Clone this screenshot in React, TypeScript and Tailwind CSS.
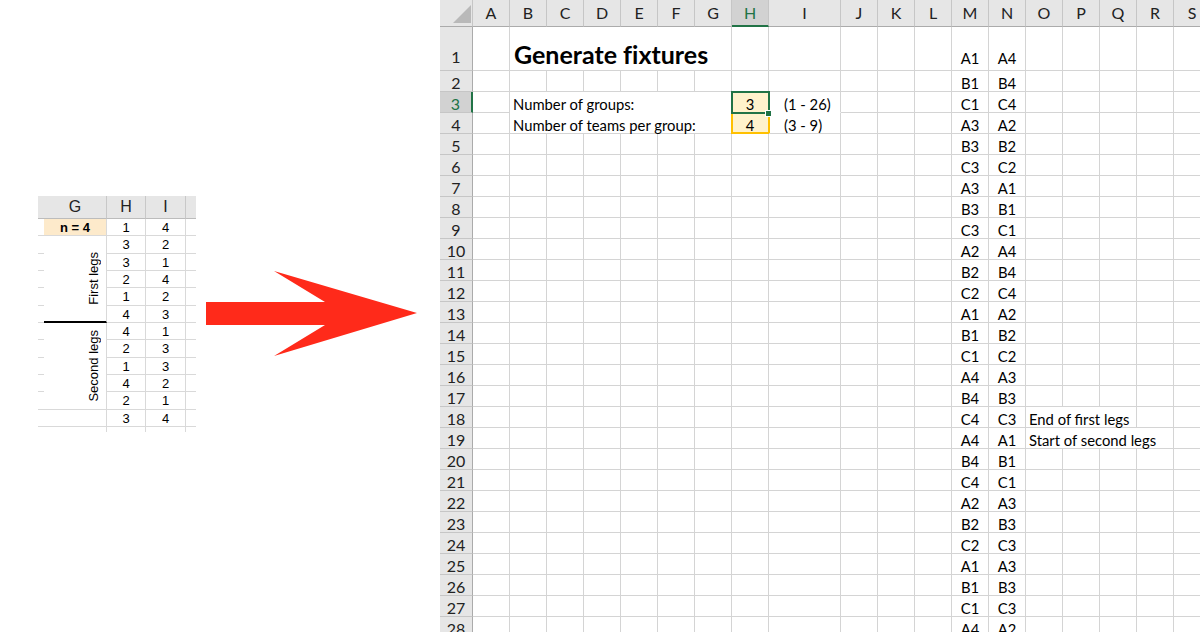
import React from 'react';

const COLS = ['A', 'B', 'C', 'D', 'E', 'F', 'G', 'H', 'I', 'J', 'K', 'L', 'M', 'N', 'O', 'P', 'Q', 'R', 'S'];
const widthOf = (c: string) => (c === 'I' ? 72 : 37);
const WCLS: Record<number, string> = {
  37: 'w-[37px]',
  72: 'w-[72px]',
  111: 'w-[111px]',
  148: 'w-[148px]',
  222: 'w-[222px]',
};

const PAIRS: [string, string][] = [
  ['A1', 'A4'], ['B1', 'B4'], ['C1', 'C4'], ['A3', 'A2'], ['B3', 'B2'], ['C3', 'C2'],
  ['A3', 'A1'], ['B3', 'B1'], ['C3', 'C1'], ['A2', 'A4'], ['B2', 'B4'], ['C2', 'C4'],
  ['A1', 'A2'], ['B1', 'B2'], ['C1', 'C2'], ['A4', 'A3'], ['B4', 'B3'], ['C4', 'C3'],
  ['A4', 'A1'], ['B4', 'B1'], ['C4', 'C1'], ['A2', 'A3'], ['B2', 'B3'], ['C2', 'C3'],
  ['A1', 'A3'], ['B1', 'B3'], ['C1', 'C3'], ['A4', 'A2'],
];

type Special = { span: number; node?: React.ReactNode; cls?: string; bcls?: string; pad?: string };

function specials(r: number): Record<string, Special> {
  const s: Record<string, Special> = {};
  const p = PAIRS[r - 1];
  if (p) {
    s.M = { span: 1, node: p[0], cls: 'justify-center' };
    s.N = { span: 1, node: p[1], cls: 'justify-center' };
  }
  if (r === 1) {
    s.B = {
      span: 6,
      node: (
        <span className="text-[25px] leading-[30px] font-bold [font-variant-ligatures:none]">Generate fixtures</span>
      ),
      cls: 'pl-[4px]',
      pad: 'pb-[1px]',
    };
  }
  if (r === 3) {
    s.B = { span: 6, node: 'Number of groups:', bcls: 'border-r-[#d4d4d4] border-b-transparent' };
    s.H = {
      span: 1,
      cls: 'justify-center bg-[#fff2cc]',
      node: (
        <>
          <span>3</span>
          <div className="absolute -left-px -top-px w-[39px] h-[23px] border-2 border-[#217346] z-10 pointer-events-none" />
          <div className="absolute left-[33px] top-[18px] w-[7px] h-[7px] bg-[#217346] border border-white z-20" />
        </>
      ),
    };
    s.I = { span: 1, node: '(1 - 26)', cls: 'pl-[15px]', bcls: 'border-r-[#d4d4d4] border-b-transparent' };
  }
  if (r === 4) {
    s.B = { span: 6, node: 'Number of teams per group:' };
    s.H = {
      span: 1,
      cls: 'justify-center bg-[#fff2cc]',
      node: (
        <>
          <span>4</span>
          <div className="absolute -left-px -top-px w-[39px] h-[22px] border-2 border-[#ffc000] pointer-events-none" />
        </>
      ),
    };
    s.I = { span: 1, node: '(3 - 9)', cls: 'pl-[15px]' };
  }
  if (r === 18) s.O = { span: 3, node: 'End of first legs' };
  if (r === 19) s.O = { span: 4, node: 'Start of second legs' };
  return s;
}

function Row({ r }: { r: number }) {
  const tall = r === 1;
  const sp = specials(r);
  const cells: React.ReactNode[] = [];
  let i = 0;
  while (i < COLS.length) {
    const c = COLS[i];
    const s = sp[c];
    const span = s ? s.span : 1;
    let w = 0;
    for (let k = 0; k < span; k++) w += widthOf(COLS[i + k]);
    const pad = s?.pad ?? (tall ? 'pb-[4px]' : 'pb-0');
    cells.push(
      <div
        key={c}
        className={`${WCLS[w]} shrink-0 relative flex items-end border-r border-b ${
          s?.bcls ?? 'border-r-[#d4d4d4] border-b-[#d4d4d4]'
        } whitespace-nowrap text-[14.8px] leading-[16px] px-[3px] ${pad} ${s?.cls ?? ''}`}
      >
        {s?.node}
      </div>
    );
    i += span;
  }
  const selected = r === 3;
  return (
    <div className={`flex shrink-0 ${tall ? 'h-[44px]' : 'h-[21px]'}`}>
      <div
        className={`w-[33px] shrink-0 flex items-end justify-center text-[16px] leading-[16px] border-b border-b-[#c6c6c6] ${
          selected
            ? 'bg-[#d2d2d2] text-[#217346] border-r-2 border-r-[#217346]'
            : 'bg-[#e6e6e6] text-[#222] border-r border-r-[#ababab]'
        } ${tall ? 'pb-[5px]' : 'pb-0'}`}
      >
        {r}
      </div>
      {cells}
    </div>
  );
}

function HeaderRow() {
  return (
    <div className="flex shrink-0 h-[27px]">
      <div className="w-[33px] shrink-0 bg-[#e6e6e6] border-r border-r-[#c6c6c6] border-b border-b-[#ababab]">
        <svg width="32" height="26" viewBox="0 0 32 26">
          <polygon points="31,5 31,23 13,23" fill="#b9b9b9" />
        </svg>
      </div>
      {COLS.map((c) => {
        const sel = c === 'H';
        return (
          <div
            key={c}
            className={`${WCLS[widthOf(c)]} shrink-0 flex justify-center pt-[2px] text-[16px] leading-[22px] border-r border-r-[#c6c6c6] ${
              sel
                ? 'bg-[#d2d2d2] text-[#217346] border-b-2 border-b-[#217346]'
                : 'bg-[#e6e6e6] text-[#222] border-b border-b-[#ababab]'
            }`}
          >
            {c}
          </div>
        );
      })}
    </div>
  );
}

const RS = [
  'row-start-1', 'row-start-2', 'row-start-3', 'row-start-4', 'row-start-5', 'row-start-6', 'row-start-7',
  'row-start-8', 'row-start-9', 'row-start-10', 'row-start-11', 'row-start-12', 'row-start-13', 'row-start-14',
];

const SMALL: [number, number][] = [
  [1, 4], [3, 2], [3, 1], [2, 4], [1, 2], [4, 3], [4, 1], [2, 3], [1, 3], [4, 2], [2, 1], [3, 4],
];

function SmallSheet() {
  const line = 'border-[#d9d9d9]';
  return (
    <div className="mt-[196px] ml-[38px] shrink-0 grid grid-cols-[6px_63px_39px_40px_10px] grid-rows-[23px_17px_18px_17px_17px_18px_17px_17px_18px_17px_17px_18px_17px_5px] font-['Liberation_Sans',Arial,sans-serif] text-[13px] text-black">
      {/* header */}
      <div className="col-start-1 row-start-1 bg-[#e6e6e6] border-b border-[#bcbcbc]" />
      {['G', 'H', 'I'].map((c, k) => (
        <div
          key={c}
          className={`${k === 0 ? 'col-start-2' : k === 1 ? 'col-start-3' : 'col-start-4'} row-start-1 bg-[#e6e6e6] border-b border-b-[#bcbcbc] border-r border-r-[#c8c8c8] flex items-center justify-center text-[16px] leading-none text-[#222]`}
        >
          {c}
        </div>
      ))}
      <div className="col-start-5 row-start-1 bg-[#e6e6e6] border-b border-[#bcbcbc]" />

      {/* left stub and right stub */}
      {RS.slice(1).map((rs, k) => (
        <React.Fragment key={rs}>
          <div className={`col-start-1 ${rs} ${k < 12 ? 'border-b' : ''} ${line}`} />
          <div className={`col-start-5 ${rs} ${k < 12 ? 'border-b' : ''} ${line}`} />
        </React.Fragment>
      ))}

      {/* G column */}
      <div className={`col-start-2 row-start-2 bg-[#fdeacb] border-r border-b ${line} flex items-center justify-center font-bold leading-none`}>
        n = 4
      </div>
      <div className="col-start-2 row-start-3 row-span-5 border-r border-r-[#d9d9d9] border-b-2 border-b-black flex items-center justify-end pr-[5px]">
        <span className="[writing-mode:vertical-rl] rotate-180 leading-[15px] whitespace-nowrap">First legs</span>
      </div>
      <div className={`col-start-2 row-start-8 row-span-5 border-r border-b ${line} flex items-center justify-end pr-[5px]`}>
        <span className="[writing-mode:vertical-rl] rotate-180 leading-[15px] whitespace-nowrap">Second legs</span>
      </div>
      <div className={`col-start-2 row-start-13 border-r border-b ${line}`} />
      <div className={`col-start-2 row-start-14 border-r ${line}`} />

      {/* H and I */}
      {SMALL.map(([h, v], k) => (
        <React.Fragment key={k}>
          <div className={`col-start-3 ${RS[k + 1]} border-r border-b ${line} flex items-center justify-center leading-[15px]`}>{h}</div>
          <div className={`col-start-4 ${RS[k + 1]} border-r border-b ${line} flex items-center justify-center leading-[15px]`}>{v}</div>
        </React.Fragment>
      ))}
      <div className={`col-start-3 row-start-14 border-r ${line}`} />
      <div className={`col-start-4 row-start-14 border-r ${line}`} />
    </div>
  );
}

function Arrow() {
  return (
    <svg className="mt-[270px] ml-[10px] shrink-0" width="212" height="87" viewBox="0 0 212 87">
      <polygon points="0,32 119,32 68,1 211,43 68,86 119,55 0,55" fill="#ff2a1a" />
    </svg>
  );
}

export default function App() {
  const rows = Array.from({ length: 28 }, (_, k) => k + 1);
  return (
    <div className="w-[1200px] h-[632px] overflow-hidden bg-white flex">
      <div className="w-[440px] shrink-0 flex items-start">
        <SmallSheet />
        <Arrow />
      </div>
      <div className="w-[760px] h-[632px] shrink-0 overflow-hidden flex flex-col font-['Lato',sans-serif] text-black">
        <HeaderRow />
        {rows.map((r) => (
          <Row key={r} r={r} />
        ))}
      </div>
    </div>
  );
}
